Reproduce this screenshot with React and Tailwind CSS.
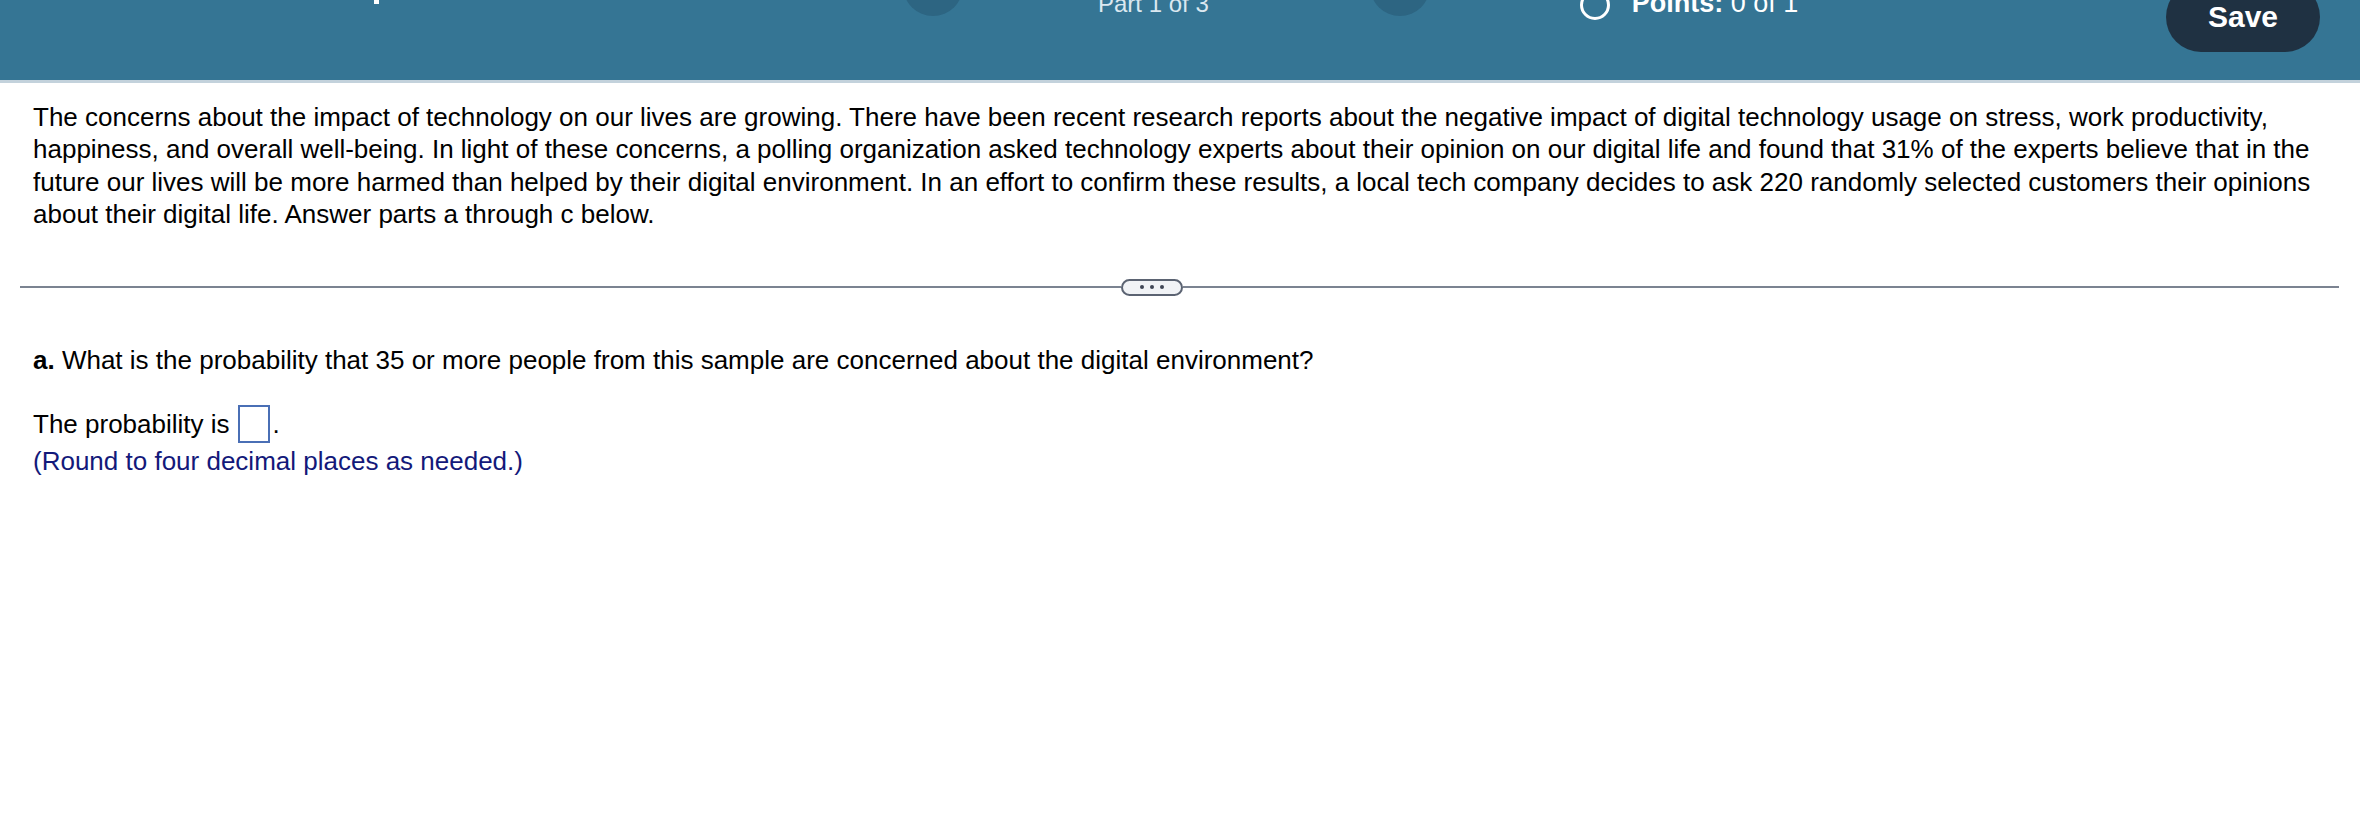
export default function App() {
  return (
    <div className="w-[2360px] h-[817px] bg-white overflow-hidden font-['Liberation_Sans',Arial,sans-serif]">
      <header className="h-[83px] bg-[#357594] border-b-[3px] border-[#c3d2dc] flex items-start overflow-hidden">
        <span className="ml-[374px] w-[5px] h-[4px] bg-white shrink-0"></span>
        <span className="ml-[524px] -mt-[44px] w-[60px] h-[60px] rounded-full bg-[#2d6582] shrink-0"></span>
        <span className="ml-[135px] -mt-[8px] text-[24px] leading-[24px] text-[#dbe8f0] whitespace-nowrap">Part 1 of 3</span>
        <span className="ml-[161px] -mt-[44px] w-[60px] h-[60px] rounded-full bg-[#2d6582] shrink-0"></span>
        <span className="ml-[150px] -mt-[10px] w-[30px] h-[30px] rounded-full border-[3px] border-white shrink-0"></span>
        <span className="ml-[22px] -mt-[10px] text-[27px] leading-[27px] text-white whitespace-nowrap">
          <b>Points:</b> 0 of 1
        </span>
        <button className="ml-auto mr-[40px] -mt-[18px] h-[70px] w-[154px] rounded-full bg-[#1f3142] text-white text-[30px] leading-[30px] font-bold flex items-center justify-center">
          Save
        </button>
      </header>
      <main className="pt-[18px]">
        <p className="pl-[33px] pr-[20px] text-[26px] leading-[32.4px] text-black">
          The concerns about the impact of technology on our lives are growing. There have been recent research reports about the negative impact of digital technology usage on stress, work productivity, happiness, and overall well-being. In light of these concerns, a polling organization asked technology experts about their opinion on our digital life and found that 31% of the experts believe that in the future our lives will be more harmed than helped by their digital environment. In an effort to confirm these results, a local tech company decides to ask 220 randomly selected customers their opinions about their digital life. Answer parts a through c below.
        </p>
        <div className="mt-[48px] ml-[20px] mr-[21px] flex items-center">
          <div className="w-[1101px] h-[1.5px] bg-[#7b8391]"></div>
          <div className="w-[62px] h-[17px] rounded-full border-2 border-[#5b6372] bg-[#f1f3f6] flex items-center justify-center gap-[6px]">
            <span className="w-[4px] h-[4px] rounded-full bg-[#3f4655]"></span>
            <span className="w-[4px] h-[4px] rounded-full bg-[#3f4655]"></span>
            <span className="w-[4px] h-[4px] rounded-full bg-[#3f4655]"></span>
          </div>
          <div className="flex-1 h-[1.5px] bg-[#7b8391]"></div>
        </div>
        <div className="pl-[33px] text-[26px] text-black">
          <p className="mt-[48px] leading-[32px]">
            <b>a.</b> What is the probability that 35 or more people from this sample are concerned about the digital environment?
          </p>
          <p className="mt-[29px] leading-[38px] flex items-center">
            The probability is
            <span className="ml-[8px] w-[32px] h-[38px] border-2 border-[#4a6fb5] inline-block"></span>
            <span className="ml-[3px]">.</span>
          </p>
          <p className="leading-[36px] text-[#13197a]">(Round to four decimal places as needed.)</p>
        </div>
      </main>
    </div>
  );
}
